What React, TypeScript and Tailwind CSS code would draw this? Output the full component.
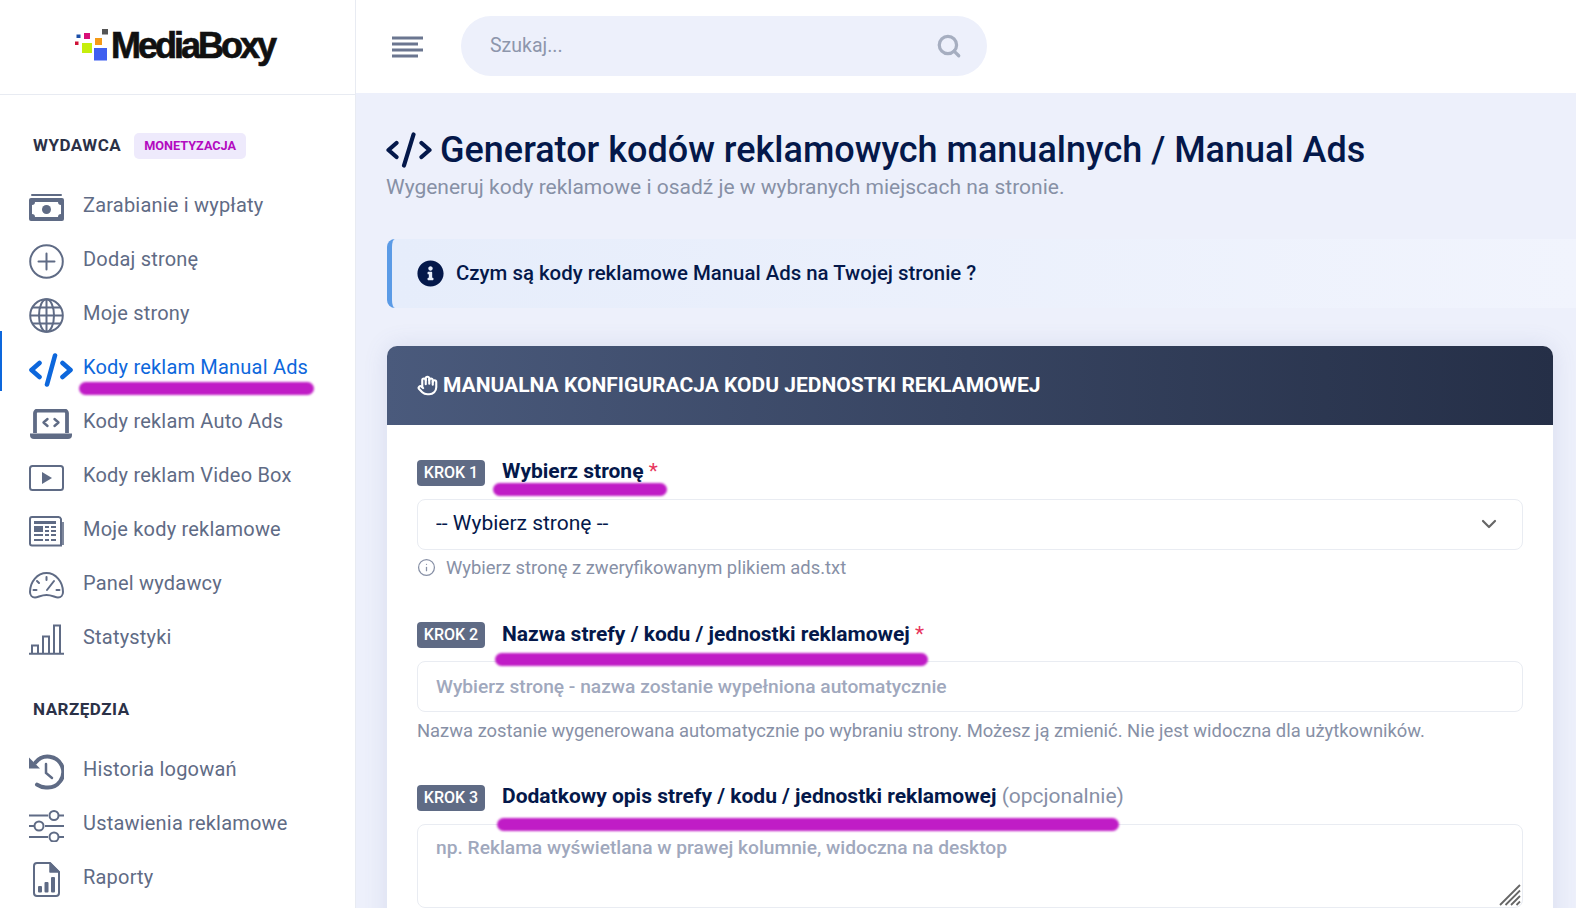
import { ChevronDown, Hand, Info, Search } from "lucide-react";
import { FaInfoCircle } from "react-icons/fa";
import type { ReactNode } from "react";

const MoneyIcon = () => (
  <svg width="35" height="27" viewBox="0 0 35 27" fill="none">
    <path d="M3 1h29" stroke="currentColor" strokeWidth="2" strokeLinecap="round" />
    <rect x="0" y="4" width="35" height="23" rx="2" fill="currentColor" />
    <path d="M6 8h23a3 3 0 0 0 3 3v9a3 3 0 0 0-3 3H6a3 3 0 0 0-3-3v-9a3 3 0 0 0 3-3z" fill="#fff" />
    <circle cx="17.5" cy="15.5" r="4.5" fill="currentColor" />
  </svg>
);

const PlusIcon = () => (
  <svg width="35" height="35" viewBox="0 0 35 35" fill="none" stroke="currentColor" strokeWidth="2" strokeLinecap="round">
    <circle cx="17.5" cy="17.5" r="16.3" />
    <path d="M17.5 9.5v16M9.5 17.5h16" />
  </svg>
);

const GlobeIcon = () => (
  <svg width="35" height="35" viewBox="0 0 35 35" fill="none" stroke="currentColor" strokeWidth="2">
    <circle cx="17.5" cy="17.5" r="16.3" />
    <ellipse cx="17.5" cy="17.5" rx="7.5" ry="16.3" />
    <path d="M17.5 1v33M1.2 17.5h32.6M3.5 9.5h28M3.5 25.5h28" />
  </svg>
);

const CodeIcon = () => (
  <svg width="44" height="34" viewBox="0 0 44 34" fill="none" stroke="currentColor" strokeWidth="4.6" strokeLinecap="round" strokeLinejoin="round">
    <path d="M10.5 10L2.5 17l8 7M33.5 10l8 7-8 7M26 2.500l-8 29" />
  </svg>
);

const LaptopIcon = () => (
  <svg width="44" height="30" viewBox="0 0 44 30" fill="none">
    <path d="M6 24V4a2.5 2.5 0 0 1 2.5-2.5h27A2.5 2.5 0 0 1 38 4v20" stroke="currentColor" strokeWidth="3.8" />
    <path d="M1 24.5h42v1.5a4 4 0 0 1-4 4H5a4 4 0 0 1-4-4z" fill="currentColor" />
    <path d="M18.5 10l-4 3.5 4 3.5M25.5 10l4 3.5-4 3.5" stroke="currentColor" strokeWidth="2.4" strokeLinecap="round" strokeLinejoin="round" />
  </svg>
);

const VideoIcon = () => (
  <svg width="35" height="26" viewBox="0 0 35 26" fill="none">
    <rect x="1" y="1" width="33" height="24" rx="2.5" stroke="currentColor" strokeWidth="2" />
    <path d="M13 7l10 6-10 6z" fill="currentColor" />
  </svg>
);

const NewsIcon = () => (
  <svg width="35" height="31" viewBox="0 0 35 31" fill="none">
    <path d="M32 3v26.500h-29a2 2 0 0 1-2-2V3a2 2 0 0 1 2-2h26a3 3 0 0 1 3 2z" stroke="currentColor" strokeWidth="2" />
    <path d="M34 6v23" stroke="currentColor" strokeWidth="1.600" />
    <path d="M5 5h22v3H5zM5 10h9v6H5zM16 10h4v2h-4zM22 10h5v2h-5zM16 14h4v2h-4zM22 14h5v2h-5zM5 18h9v2H5zM16 18h4v2h-4zM22 18h5v2h-5zM5 23h9v2H5zM16 23h4v2h-4zM22 23h5v2h-5z" fill="currentColor" />
  </svg>
);

const GaugeIcon = () => (
  <svg width="35" height="27" viewBox="0 0 35 27" fill="none" stroke="currentColor" strokeWidth="2" strokeLinecap="round">
    <path d="M6 25.500C3 25.500 1 23 1 20 1 9.500 8.500 1 17.500 1S34 9.500 34 20c0 3-2 5.500-5 5.500-3 0-6-2.500-11.500-2.500S9 25.500 6 25.500z" />
    <path d="M17.500 5v3M8 9l2 2M4.500 18h3M27.500 18h3M18 18l7-9" />
  </svg>
);

const BarsIcon = () => (
  <svg width="35" height="31" viewBox="0 0 35 31" fill="none" stroke="currentColor" strokeWidth="2">
    <path d="M0 29.800h35" />
    <path d="M3 29V21.500h6V29M14 29V12.500h6V29M25 29V1.500h6V29" />
  </svg>
);

const HistoryIcon = () => (
  <svg width="35" height="36" viewBox="0 0 35 36" fill="none">
    <path d="M6.500 8.500A15.500 15.500 0 1 1 17 33.500a15.500 15.500 0 0 1-9-2.800" stroke="currentColor" strokeWidth="4" strokeLinecap="round" />
    <path d="M0 3.500v11h11z" fill="currentColor" />
    <path d="M17 10v9l6 5" stroke="currentColor" strokeWidth="2.500" strokeLinecap="round" />
  </svg>
);

const SlidersIcon = () => (
  <svg width="35" height="32" viewBox="0 0 35 32" fill="none" stroke="currentColor" strokeWidth="2">
    <path d="M0 5.500h19M30 5.500h5M0 16h6M16 16h19M0 27h19M30 27h5" />
    <circle cx="25" cy="5.500" r="4.500" />
    <circle cx="10" cy="16" r="4.500" />
    <circle cx="25" cy="27" r="4.500" />
  </svg>
);

const ReportIcon = () => (
  <svg width="27" height="35" viewBox="0 0 27 35" fill="none">
    <path d="M17 1H4a3 3 0 0 0-3 3v27a3 3 0 0 0 3 3h19a3 3 0 0 0 3-3V10z" stroke="currentColor" strokeWidth="2" strokeLinejoin="round" />
    <path d="M17 1v9h9z" fill="currentColor" stroke="currentColor" strokeWidth="1.500" strokeLinejoin="round" />
    <rect x="5" y="24" width="4" height="6.500" rx="1" fill="currentColor" />
    <rect x="11.500" y="20" width="4" height="10.500" rx="1" fill="currentColor" />
    <rect x="18" y="15" width="4" height="15.500" rx="1" fill="currentColor" />
  </svg>
);

const Logo = () => (
  <div className="flex items-center justify-center h-[94px] pr-[6px]">
    <svg width="36" height="32" viewBox="0 0 36 32" className="mb-[4px]">
      <rect x="1.500" y="5.500" width="4" height="3.500" fill="#1c4fa8" />
      <rect x="0" y="12.500" width="3.500" height="3.500" fill="#cf1237" />
      <rect x="9" y="4" width="6" height="6" fill="#d80f78" />
      <rect x="7" y="14" width="10" height="10" fill="#c5ee0c" />
      <rect x="20" y="9" width="7" height="7" fill="#f59a16" />
      <rect x="27" y="0" width="6" height="5.500" fill="#555" />
      <rect x="19" y="19" width="13" height="12.500" fill="#3f5ff0" />
    </svg>
    <span className="font-['Liberation_Sans',sans-serif] font-bold text-[36px] leading-none tracking-[-3px] text-[#111] [-webkit-text-stroke:0.7px_#111] mb-[2px]">
      MediaBoxy
    </span>
  </div>
);

const NavItem = ({ icon, label, active }: { icon: ReactNode; label: string; active?: boolean }) => (
  <a
    className={`relative flex h-[54px] items-center pl-[29px] text-[20px] tracking-[0.2px] ${
      active ? "text-[#0d67dc]" : "text-[#5f6b85]"
    }`}
  >
    {active && <span className="absolute left-0 top-[-9px] h-[60px] w-[2px] bg-[#0d67dc]" />}
    <span className="mt-[5px] flex w-[54px] shrink-0 items-center">{icon}</span>
    <span>{label}</span>
  </a>
);

const Scribble = ({ className }: { className: string }) => (
  <span className={`pointer-events-none absolute z-10 rounded-full bg-[#c01cc6] blur-[1px] ${className}`} />
);

const StepLabel = ({ step, children }: { step: number; children: ReactNode }) => (
  <div className="relative flex items-center">
    <span className="flex h-[26px] w-[68px] items-center justify-center rounded-[4px] bg-[#5f6b85] text-[16px] font-medium text-white">
      KROK {step}
    </span>
    <span className="ml-[17px] mb-[2px] text-[21px] font-bold text-[#04184a]">{children}</span>
  </div>
);

const fieldClass =
  "w-full rounded-[8px] border border-[#e9ecf2] bg-white px-[18px] outline-none placeholder:text-[#a0a8bd]";

export default function App() {
  return (
    <div className="flex h-screen w-full overflow-hidden bg-white font-['Roboto',sans-serif]">
      <aside className="h-full w-[356px] shrink-0 border-r border-[#e8ebf2] bg-white">
        <div className="border-b border-[#e8ebf2]">
          <Logo />
        </div>

        <div className="flex h-[83px] items-center pl-[33px] pt-[18px]">
          <span className="text-[17px] font-bold tracking-[0.5px] text-[#2b3147]">WYDAWCA</span>
          <span className="ml-[13px] mt-[1px] rounded-[5px] bg-[#eeeafc] px-[10px] py-[3px] text-[12.700px] font-bold text-[#b30bc0]">
            MONETYZACJA
          </span>
        </div>
        <nav>
          <NavItem icon={<MoneyIcon />} label="Zarabianie i wypłaty" />
          <NavItem icon={<PlusIcon />} label="Dodaj stronę" />
          <NavItem icon={<GlobeIcon />} label="Moje strony" />
          <div className="relative">
            <NavItem icon={<CodeIcon />} label="Kody reklam Manual Ads" active />
            <Scribble className="left-[79px] top-[42px] h-[13px] w-[235px]" />
          </div>
          <NavItem icon={<LaptopIcon />} label="Kody reklam Auto Ads" />
          <NavItem icon={<VideoIcon />} label="Kody reklam Video Box" />
          <NavItem icon={<NewsIcon />} label="Moje kody reklamowe" />
          <NavItem icon={<GaugeIcon />} label="Panel wydawcy" />
          <NavItem icon={<BarsIcon />} label="Statystyki" />
        </nav>

        <div className="flex h-[78px] items-center pl-[33px] pt-[14px]">
          <span className="text-[17px] font-bold tracking-[0.5px] text-[#2b3147]">NARZĘDZIA</span>
        </div>
        <nav>
          <NavItem icon={<HistoryIcon />} label="Historia logowań" />
          <NavItem icon={<SlidersIcon />} label="Ustawienia reklamowe" />
          <NavItem icon={<span className="ml-[4px] block"><ReportIcon /></span>} label="Raporty" />
        </nav>
      </aside>

      <div className="flex min-w-0 flex-1 flex-col">
        <header className="flex h-[93px] shrink-0 items-center bg-white pl-[36px]">
          <svg width="31" height="22" viewBox="0 0 31 22" fill="none" stroke="#6b7690" strokeWidth="3">
            <path d="M0 2h31M0 8h26M0 14h31M0 20h26" />
          </svg>
          <div className="ml-[38px] mb-[1px] flex h-[60px] w-[526px] items-center justify-between rounded-full bg-[#edf0fb] pl-[29px] pr-[25px]">
            <span className="text-[19.500px] text-[#8d96ab]">Szukaj...</span>
            <Search size={26} strokeWidth={3} className="text-[#a6aec0]" />
          </div>
        </header>

        <main className="flex-1 overflow-hidden bg-[#edf0fb] pl-[30px] pr-[23px] pt-[38px]">
          <div className="flex items-center">
            <svg width="46" height="36" viewBox="0 0 46 36" fill="none" stroke="#04184a" strokeWidth="4.200" strokeLinecap="round" strokeLinejoin="round">
              <path d="M10.500 11L2.500 18l8 7M35.500 11l8 7-8 7M27.500 2.500L18 33.500" />
            </svg>
            <h1 className="ml-[8px] text-[36px] font-medium leading-[38px] text-[#04184a]">
              Generator kodów reklamowych manualnych / Manual Ads
            </h1>
          </div>
          <p className="mt-[6px] text-[21px] leading-[24px] text-[#8790a6]">
            Wygeneruj kody reklamowe i osadź je w wybranych miejscach na stronie.
          </p>

          <div className="ml-[1px] mt-[40px] mr-[-23px] flex h-[69px] items-center rounded-l-[8px] border-l-[5px] border-[#5b9be6] bg-gradient-to-r from-[#e6edfb] to-[#f1f4fd] pl-[25px]">
            <FaInfoCircle size={27} className="text-[#04184a]" />
            <span className="ml-[12px] text-[20.400px] font-medium text-[#04184a]">
              Czym są kody reklamowe Manual Ads na Twojej stronie ?
            </span>
          </div>

          <section className="ml-[1px] mt-[38px] rounded-t-[10px] bg-white shadow-[0_0_24px_rgba(90,105,160,0.14)]">
            <div className="flex h-[79px] items-center rounded-t-[10px] bg-gradient-to-r from-[#4a5a7c] to-[#252f47] pl-[30px]">
              <Hand size={21} strokeWidth={2.400} className="text-white" />
              <h2 className="ml-[5px] mt-[1px] text-[21px] font-bold text-white">
                MANUALNA KONFIGURACJA KODU JEDNOSTKI REKLAMOWEJ
              </h2>
            </div>

            <div className="px-[30px] pt-[31px]">
              <div className="relative">
                <StepLabel step={1}>
                  Wybierz stronę <span className="font-normal text-[#e8365d]">*</span>
                </StepLabel>
                <Scribble className="left-[76px] top-[27px] h-[13px] w-[174px]" />
              </div>
              <div className="relative mt-[9px]">
                <select className={`${fieldClass} h-[51px] appearance-none text-[21px] text-[#04184a]`} defaultValue="">
                  <option value="">-- Wybierz stronę --</option>
                </select>
                <ChevronDown size={24} strokeWidth={2.200} className="pointer-events-none absolute right-[22px] top-[13px] text-[#666]" />
              </div>
              <div className="mt-[7px] flex items-center text-[18.400px] leading-[21px] text-[#8790a6]">
                <Info size={19} strokeWidth={1.600} className="shrink-0" />
                <span className="ml-[10px]">Wybierz stronę z zweryfikowanym plikiem ads.txt</span>
              </div>

              <div className="relative mt-[41px]">
                <StepLabel step={2}>
                  Nazwa strefy / kodu / jednostki reklamowej <span className="font-normal text-[#e8365d]">*</span>
                </StepLabel>
                <Scribble className="left-[78px] top-[34px] h-[13px] w-[433px]" />
              </div>
              <input
                className={`${fieldClass} mt-[9px] h-[51px] text-[19.200px] font-medium text-[#04184a]`}
                placeholder="Wybierz stronę - nazwa zostanie wypełniona automatycznie"
              />
              <p className="mt-[8px] text-[18.400px] leading-[21px] text-[#8790a6]">
                Nazwa zostanie wygenerowana automatycznie po wybraniu strony. Możesz ją zmienić. Nie jest widoczna dla użytkowników.
              </p>

              <div className="relative mt-[40px]">
                <StepLabel step={3}>
                  Dodatkowy opis strefy / kodu / jednostki reklamowej{" "}
                  <span className="font-normal text-[#8790a6]">(opcjonalnie)</span>
                </StepLabel>
                <Scribble className="left-[80px] top-[37px] h-[13px] w-[622px]" />
              </div>
              <div className="relative mt-[9px]">
                <textarea
                  className={`${fieldClass} block h-[84px] resize-none pt-[9px] text-[19.200px] font-medium text-[#04184a]`}
                  placeholder="np. Reklama wyświetlana w prawej kolumnie, widoczna na desktop"
                />
                <svg width="22" height="22" viewBox="0 0 22 22" fill="none" stroke="#666" strokeWidth="1.800" className="pointer-events-none absolute bottom-[2px] right-[2px]">
                  <path d="M1 21L21 1M6.500 21L21 6.500M12 21l9-9M17.500 21l3.500-3.500" />
                </svg>
              </div>
              <div className="h-[80px]" />
            </div>
          </section>
        </main>
      </div>
    </div>
  );
}
